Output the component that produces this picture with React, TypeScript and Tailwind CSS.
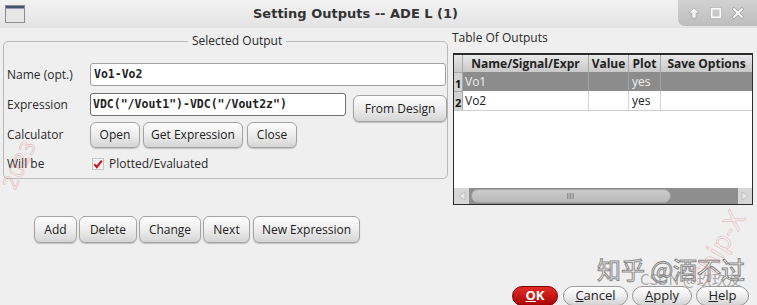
import React from "react";

function Btn({ children, className = "" }: { children: React.ReactNode; className?: string }) {
  return (
    <button className={`flex shrink-0 items-center justify-center rounded-[6px] border border-[#a3a3a3] bg-linear-to-b from-[#fefefe] via-[#ededed] to-[#d5d5d5] text-[12px] text-[#222] shadow-[0_1px_1px_rgba(0,0,0,0.2)] ${className}`}>
      {children}
    </button>
  );
}

function Pill({ children, className = "" }: { children: React.ReactNode; className?: string }) {
  return (
    <button className={`flex shrink-0 items-center justify-center rounded-full border border-[#9a9a9a] bg-linear-to-b from-[#ffffff] via-[#eeeeee] to-[#d2d2d2] text-[13px] text-[#222] ${className}`}>
      {children}
    </button>
  );
}

const WinIcon = () => (
  <svg width="20" height="18" viewBox="0 0 20 18" className="ml-[5px] mt-[5px]">
    <rect x="0.5" y="0.5" width="19" height="17" fill="#e6e6e6" stroke="#8c8c8c" />
    <rect x="1" y="1" width="18" height="2.5" fill="#42536f" />
  </svg>
);

const Label = ({ children }: { children: React.ReactNode }) => (
  <div className="flex h-[23px] w-[83px] shrink-0 items-center text-[12px] text-[#2a2a2a]">{children}</div>
);

export default function App() {
  return (
    <div className="relative h-[305px] w-[757px] overflow-hidden bg-[#efefef] font-['Open_Sans',sans-serif] text-[#222]">
      {/* title bar */}
      <div className="flex h-[28px] items-start bg-linear-to-b from-[#f2f2f2] to-[#e3e3e3]">
        <WinIcon />
        <div className="ml-[228px] mt-[6px] font-['DejaVu_Sans',sans-serif] text-[13px] font-bold leading-[16px] text-[#333]">
          Setting Outputs -- ADE L (1)
        </div>
        <div className="ml-auto flex h-[26px] w-[79px] items-center gap-[10px] rounded-bl-[7px] bg-linear-to-b from-[#d2d2d2] to-[#bdbdbd] pl-[10px]">
          <svg width="12" height="12" viewBox="0 0 12 12">
            <path d="M6 1 L11 6 H8 V11 H4 V6 H1 Z" fill="#fafafa" stroke="#9a9a9a" strokeWidth="0.6" />
          </svg>
          <svg width="12" height="12" viewBox="0 0 12 12">
            <rect x="1.5" y="1.5" width="9" height="9" fill="none" stroke="#fafafa" strokeWidth="2" />
            <rect x="0.5" y="0.5" width="11" height="11" fill="none" stroke="#a0a0a0" strokeWidth="0.5" />
          </svg>
          <svg width="12" height="12" viewBox="0 0 12 12">
            <path d="M2 2 L10 10 M10 2 L2 10" stroke="#9a9a9a" strokeWidth="3.2" strokeLinecap="round" />
            <path d="M2 2 L10 10 M10 2 L2 10" stroke="#fafafa" strokeWidth="2" strokeLinecap="round" />
          </svg>
        </div>
      </div>

      <div className="flex h-[258px]">
        {/* left column */}
        <div className="w-[450px] shrink-0 pl-[3px]">
          <div className="relative mt-[13px] h-[138px] w-[445px] rounded-[5px] border border-[#b9b9b9] pl-[3px] pt-[21px]">
            <span className="absolute left-[184px] top-[-9px] bg-[#efefef] px-[4px] text-[12px] leading-[16px] text-[#2a2a2a]">
              Selected Output
            </span>

            <div className="flex h-[23px] items-center">
              <Label>Name (opt.)</Label>
              <div className="flex h-[23px] w-[356px] items-center rounded-[3px] border border-[#a0a0a0] bg-white pl-[3px] font-['DejaVu_Sans_Mono',monospace] text-[11.5px] font-bold text-[#222]">
                Vo1-Vo2
              </div>
            </div>

            <div className="mt-[7px] flex items-start">
              <Label>Expression</Label>
              <div className="flex h-[23px] w-[256px] items-center rounded-[3px] border border-[#6f6f6f] bg-white pl-[2px] font-['DejaVu_Sans_Mono',monospace] text-[11.5px] font-bold text-[#222]">
                VDC("/Vout1")-VDC("/Vout2z")
              </div>
              <Btn className="ml-[7px] mt-[2px] h-[27px] w-[94px]">From Design</Btn>
            </div>

            <div className="flex h-[26px] items-center">
              <div className="w-[83px] shrink-0 text-[12px] text-[#2a2a2a]">Calculator</div>
              <Btn className="h-[26px] w-[50px]">Open</Btn>
              <Btn className="ml-[3px] h-[26px] w-[100px]">Get Expression</Btn>
              <Btn className="ml-[4px] h-[26px] w-[50px]">Close</Btn>
            </div>

            <div className="mt-[6px] flex h-[20px] items-center">
              <div className="w-[85px] shrink-0 text-[12px] text-[#2a2a2a]">Will be</div>
              <svg width="12" height="12" viewBox="0 0 12 12">
                <rect x="0.5" y="0.5" width="11" height="11" fill="#f6f6f6" stroke="#c4c4c4" />
                <path d="M2.3 6.3 L4.8 9 L9.8 2.6" fill="none" stroke="#d01818" strokeWidth="2.2" />
              </svg>
              <span className="ml-[5px] text-[12px] text-[#2a2a2a]">Plotted/Evaluated</span>
            </div>
          </div>

          <div className="mt-[37px] flex gap-[2px] pl-[31px]">
            <Btn className="h-[27px] w-[43px]">Add</Btn>
            <Btn className="h-[27px] w-[58px]">Delete</Btn>
            <Btn className="h-[27px] w-[62px]">Change</Btn>
            <Btn className="h-[27px] w-[47px]">Next</Btn>
            <Btn className="ml-[1px] h-[27px] w-[107px]">New Expression</Btn>
          </div>
        </div>

        {/* right column */}
        <div className="flex-1 pl-[2px]">
          <div className="mt-[3px] text-[12px] leading-[14px] text-[#2a2a2a]">Table Of Outputs</div>
          <div className="ml-[1px] mt-[8px] flex h-[152px] w-[300px] flex-col border border-t-2 border-[#2b2b2b] bg-white">
            <div className="flex h-[17px] bg-linear-to-b from-[#e8e8e8] to-[#c8c8c8] text-[12px] font-bold leading-[17px] text-[#222]">
              <div className="w-[9px] border-r border-[#a8a8a8]" />
              <div className="w-[126px] border-r border-[#a8a8a8] text-center">Name/Signal/Expr</div>
              <div className="w-[40px] border-r border-[#a8a8a8] text-center">Value</div>
              <div className="w-[32px] border-r border-[#a8a8a8] text-center">Plot</div>
              <div className="flex-1 text-center">Save Options</div>
            </div>
            <div className="flex h-[19px] bg-[#8c8c8c] text-[12px] leading-[19px] text-[#f0f0f0]">
              <div className="flex w-[9px] items-end border-r border-t border-[#a8a8a8] bg-[#d2d2d2] pl-[1px] pb-[2px] text-[11px] font-bold leading-none text-[#111]">1</div>
              <div className="w-[126px] border-r border-[#a0a0a0] pl-[2px]">Vo1</div>
              <div className="w-[40px] border-r border-[#a0a0a0]" />
              <div className="w-[32px] border-r border-[#a0a0a0] pl-[3px]">yes</div>
              <div className="flex-1" />
            </div>
            <div className="flex h-[20px] border-b border-[#cfcfcf] text-[12px] leading-[19px] text-[#222]">
              <div className="flex w-[9px] items-end border-r border-t border-[#a8a8a8] bg-[#d2d2d2] pl-[1px] pb-[2px] text-[11px] font-bold leading-none text-[#111]">2</div>
              <div className="w-[126px] border-r border-[#d4d4d4] pl-[2px]">Vo2</div>
              <div className="w-[40px] border-r border-[#d4d4d4]" />
              <div className="w-[32px] border-r border-[#d4d4d4] pl-[3px]">yes</div>
              <div className="flex-1" />
            </div>
            <div className="flex-1" />
            <div className="flex h-[16px] items-center bg-[#8e8e8e]">
              <div className="flex h-[16px] w-[15px] items-center justify-center bg-[#d6d6d6]">
                <svg width="10" height="10" viewBox="0 0 10 10">
                  <path d="M8 1 L2 5 L8 9 Z" fill="#e8e8e8" stroke="#b8b8b8" strokeWidth="0.8" />
                </svg>
              </div>
              <div className="ml-[2px] flex h-[14px] w-[200px] items-center justify-center rounded-full border border-[#a3a3a3] bg-linear-to-b from-[#cbcbcb] to-[#bababa]">
                <svg width="8" height="6" viewBox="0 0 8 6">
                  <path d="M0.5 0 V6 M2 0 V6 M3.5 0 V6 M5 0 V6 M6.5 0 V6" stroke="#8a8a8a" strokeWidth="0.8" />
                </svg>
              </div>
              <div className="flex-1" />
              <div className="flex h-[16px] w-[14px] items-center justify-center bg-[#d6d6d6]">
                <svg width="10" height="10" viewBox="0 0 10 10">
                  <path d="M2 1 L8 5 L2 9 Z" fill="#e8e8e8" stroke="#b8b8b8" strokeWidth="0.8" />
                </svg>
              </div>
            </div>
          </div>
        </div>
      </div>

      {/* dialog buttons */}
      <div className="flex h-[20px] items-start justify-end pr-[8px]">
        <button className="flex h-[20px] w-[46px] items-center justify-center rounded-full border border-[#7c0000] bg-linear-to-b from-[#e32a26] to-[#a80303] text-[13px] font-bold text-white">
          <span className="underline">O</span>K
        </button>
        <Pill className="ml-[5px] h-[20px] w-[65px]">
          <span className="underline">C</span>ancel
        </Pill>
        <Pill className="ml-[4px] h-[20px] w-[60px]">
          <span className="underline">A</span>pply
        </Pill>
        <Pill className="ml-[4px] h-[20px] w-[53px]">
          <span className="underline">H</span>elp
        </Pill>
      </div>

      {/* watermarks */}
      <div className="pointer-events-none absolute left-[597px] top-[255px] whitespace-nowrap font-['Noto_Sans_CJK_SC',sans-serif] text-[24px] leading-[28px] text-white/85 [-webkit-text-stroke:1px_rgba(105,105,105,0.8)]">
        知乎 @酒不过
      </div>
      <div className="pointer-events-none absolute left-[640px] top-[270px] whitespace-nowrap font-['Noto_Sans_CJK_SC',sans-serif] text-[15px] leading-[18px] text-[#8a8a8a]/70">
        CSDN @玖玖友
      </div>
      <div className="pointer-events-none absolute left-[-6px] top-[150px] rotate-[-65deg] font-['DejaVu_Sans',sans-serif] text-[20px] text-transparent [-webkit-text-stroke:0.6px_rgba(225,120,120,0.5)]">
        2023
      </div>
      <div className="pointer-events-none absolute left-[676px] top-[230px] rotate-[-60deg] whitespace-nowrap font-['DejaVu_Sans',sans-serif] text-[26px] text-transparent [-webkit-text-stroke:0.6px_rgba(225,120,120,0.45)]">
        Chip-X
      </div>
    </div>
  );
}
